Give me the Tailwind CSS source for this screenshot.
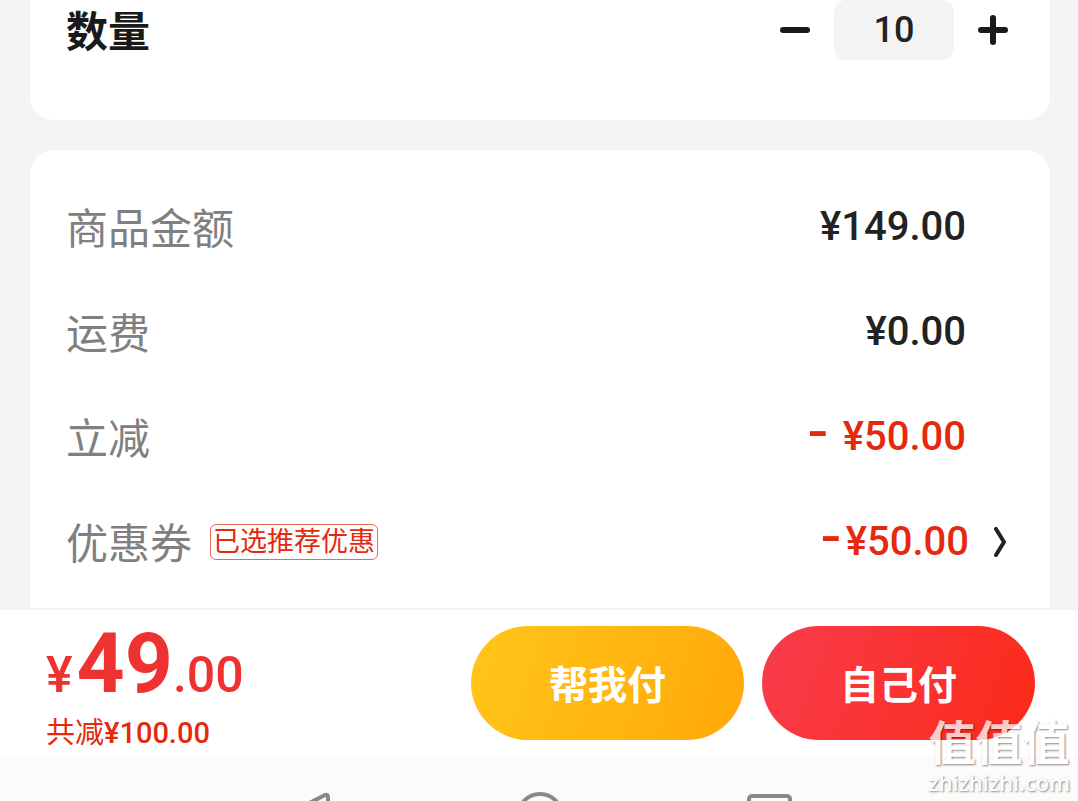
<!DOCTYPE html>
<html lang="zh-CN">
<head>
  <meta charset="UTF-8" />
  <meta name="viewport" content="width=device-width, initial-scale=1.0" />
  <title>确认订单</title>
  <script src="https://cdn.jsdelivr.net/npm/@tailwindcss/browser@4"></script>
</head>
<body class="relative flex h-screen flex-col overflow-hidden bg-[#f4f4f4] font-[Roboto,'Noto_Sans_CJK_SC',sans-serif] text-[#222]">
  <main class="flex min-h-0 flex-1 flex-col gap-[30px] overflow-hidden pr-7 pl-[30px]">
    <!-- Quantity -->
    <section class="flex h-[120px] shrink-0 items-start justify-between rounded-b-3xl bg-white pr-[42px] pl-9">
      <label for="qty" class="text-[42px] leading-[66px] font-bold text-[#1a1a1a]">数量</label>
      <div class="flex items-center gap-6">
        <button type="button" aria-label="减少" class="flex h-[60px] items-center">
          <svg width="30" height="30" viewBox="0 0 30 30" fill="none" stroke="#1a1a1a" stroke-width="6" stroke-linecap="round">
            <path d="M3 15h24" />
          </svg>
        </button>
        <input id="qty" type="text" inputmode="numeric" value="10" class="h-[60px] w-[120px] rounded-xl bg-[#f4f4f4] text-center text-[36px] font-medium" />
        <button type="button" aria-label="增加" class="flex h-[60px] items-center">
          <svg width="30" height="30" viewBox="0 0 30 30" fill="none" stroke="#1a1a1a" stroke-width="6" stroke-linecap="round">
            <path d="M3 15h24M15 3v24" />
          </svg>
        </button>
      </div>
    </section>

    <!-- Price details -->
    <section class="min-h-0 flex-1 rounded-t-3xl bg-white pt-6 pl-9">
      <dl class="text-[42px] leading-[60px]">
        <div class="flex h-[105px] items-center justify-between pr-[84px]">
          <dt class="pt-1.5 text-[#808080]">商品金额</dt>
          <dd class="text-[40px] font-medium">¥149.00</dd>
        </div>
        <div class="flex h-[105px] items-center justify-between pr-[84px]">
          <dt class="pt-1.5 text-[#808080]">运费</dt>
          <dd class="text-[40px] font-medium">¥0.00</dd>
        </div>
        <div class="flex h-[105px] items-center justify-between pr-[84px]">
          <dt class="pt-1.5 text-[#808080]">立减</dt>
          <dd class="text-[40px] font-medium text-[#e4290f]"><span class="mr-1 font-['DejaVu_Sans',sans-serif] text-[60px] leading-0 font-normal">-</span> ¥50.00</dd>
        </div>
        <div class="flex h-[105px] items-center justify-between pr-11">
          <dt class="flex items-center gap-[18px] text-[#808080]">
            <span class="pt-1.5">优惠券</span>
            <span class="rounded-md border border-[#e4290f]/70 px-[2px] text-[27px] leading-[34px] text-[#e4290f]">已选推荐优惠</span>
          </dt>
          <dd>
            <button type="button" class="flex items-center gap-6 text-[40px] font-medium text-[#e4290f]">
              <span><span class="mr-1 font-['DejaVu_Sans',sans-serif] text-[60px] leading-0 font-normal">-</span>¥50.00</span>
              <svg width="13" height="30" viewBox="0 0 13 30" fill="none" stroke="#222" stroke-width="4" stroke-linecap="round" stroke-linejoin="round">
                <path d="M3 2l8 13l-8 13" />
              </svg>
            </button>
          </dd>
        </div>
      </dl>
    </section>
  </main>

  <!-- Pay bar -->
  <footer class="flex h-[149px] shrink-0 items-start justify-between border-t-2 border-[#f4f4f4] bg-white pt-4 pr-[43px] pl-[46px]">
    <div>
      <p class="flex items-baseline text-[50px] leading-[76px] font-medium text-[#ee3131]">
        <span>¥</span><span class="ml-1 text-[84px] font-bold">49</span><span>.00</span>
      </p>
      <p class="text-[29px] leading-10 text-[#e4290f]">共减<span class="font-medium">¥100.00</span></p>
    </div>
    <div class="flex gap-[18px] text-[39px] font-bold text-white">
      <button type="button" class="h-[114px] w-[273px] rounded-full bg-linear-[110deg,#ffc61a,#ffa809] pt-1.5">帮我付</button>
      <button type="button" class="h-[114px] w-[273px] rounded-full bg-linear-[110deg,#f93c4c,#fb2a18] pt-1.5">自己付</button>
    </div>
  </footer>

  <!-- System navigation -->
  <nav class="flex h-11 shrink-0 items-start justify-center gap-[184px] overflow-hidden bg-[#fbfbfb] pt-[35px]">
    <button type="button" aria-label="返回">
      <svg width="48" height="48" viewBox="0 0 48 48" fill="none" stroke="#888" stroke-width="4" stroke-linejoin="round">
        <path d="M42 3Q45 2 45 5V43Q45 46 42 45L5 26Q2 24 5 22Z" />
      </svg>
    </button>
    <button type="button" aria-label="主页">
      <svg width="48" height="48" viewBox="0 0 48 48" fill="none" stroke="#888" stroke-width="4">
        <circle cx="25" cy="24" r="22" />
      </svg>
    </button>
    <button type="button" aria-label="最近任务">
      <svg width="48" height="48" viewBox="0 0 48 48" fill="none" stroke="#888" stroke-width="4">
        <rect x="2" y="4" width="41" height="41" rx="3" />
      </svg>
    </button>
  </nav>

  <!-- Watermark -->
  <div class="pointer-events-none absolute right-2 bottom-1.5 flex flex-col items-center text-white opacity-75 [text-shadow:1px_1px_2px_rgb(0_0_0/0.6)]">
    <span class="text-[47px] leading-[50px] font-bold">值值值</span>
    <span class="font-['Noto_Sans',sans-serif] text-[22px] leading-[26px] font-medium">zhizhizhi.com</span>
  </div>
</body>
</html>
